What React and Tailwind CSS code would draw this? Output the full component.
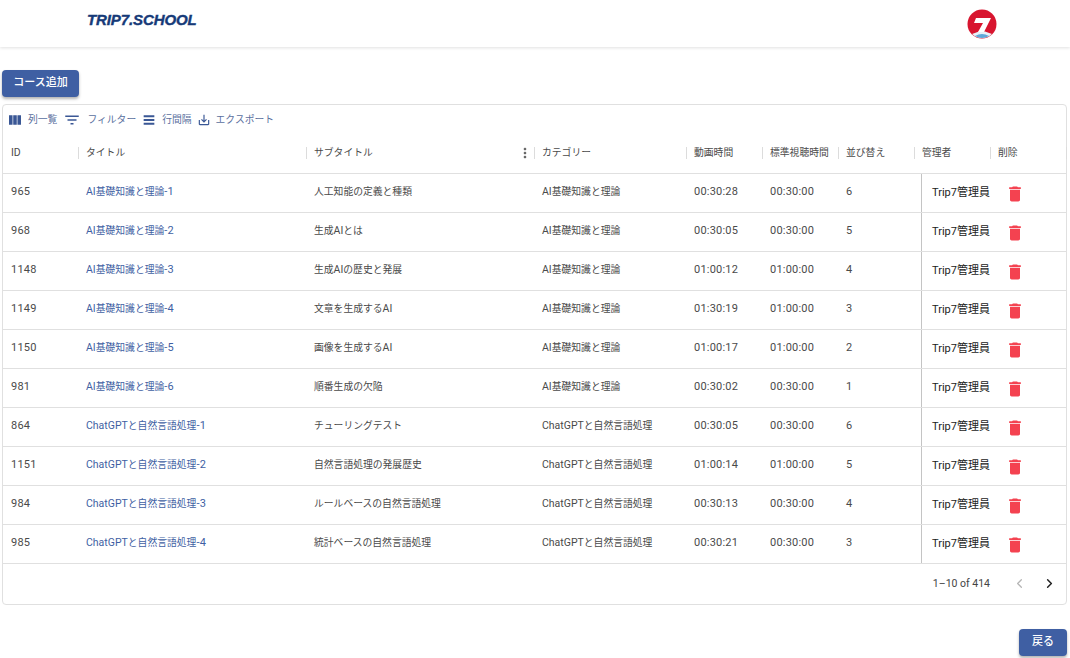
import { ChevronLeft, ChevronRight } from "lucide-react";

const FONT = "font-['Roboto','Noto_Sans_CJK_JP',sans-serif]";
const COLUMNS = "grid-cols-[75px_228px_228px_152px_76px_76px_76px_76px_76px]";

const AI = "AI基礎知識と理論";
const NLP = "ChatGPTと自然言語処理";

const rows = [
  { id: "965", title: `${AI}-1`, sub: "人工知能の定義と種類", cat: AI, time: "00:30:28", std: "00:30:00", order: "6" },
  { id: "968", title: `${AI}-2`, sub: "生成AIとは", cat: AI, time: "00:30:05", std: "00:30:00", order: "5" },
  { id: "1148", title: `${AI}-3`, sub: "生成AIの歴史と発展", cat: AI, time: "01:00:12", std: "01:00:00", order: "4" },
  { id: "1149", title: `${AI}-4`, sub: "文章を生成するAI", cat: AI, time: "01:30:19", std: "01:00:00", order: "3" },
  { id: "1150", title: `${AI}-5`, sub: "画像を生成するAI", cat: AI, time: "01:00:17", std: "01:00:00", order: "2" },
  { id: "981", title: `${AI}-6`, sub: "順番生成の欠陥", cat: AI, time: "00:30:02", std: "00:30:00", order: "1" },
  { id: "864", title: `${NLP}-1`, sub: "チューリングテスト", cat: NLP, time: "00:30:05", std: "00:30:00", order: "6" },
  { id: "1151", title: `${NLP}-2`, sub: "自然言語処理の発展歴史", cat: NLP, time: "01:00:14", std: "01:00:00", order: "5" },
  { id: "984", title: `${NLP}-3`, sub: "ルールベースの自然言語処理", cat: NLP, time: "00:30:13", std: "00:30:00", order: "4" },
  { id: "985", title: `${NLP}-4`, sub: "統計ベースの自然言語処理", cat: NLP, time: "00:30:21", std: "00:30:00", order: "3" },
];

const headers = ["ID", "タイトル", "サブタイトル", "カテゴリー", "動画時間", "標準視聴時間", "並び替え", "管理者", "削除"];

// Digits and Latin letters sit a little larger than the CJK around them in the reference.
function Mixed({ text }) {
  return text.split(/([0-9:-]+|[A-Za-z]+)/).map((part, i) => {
    if (/^[0-9:-]+$/.test(part)) {
      return <span key={i} className="text-[11px] tracking-[0.2px]">{part}</span>;
    }
    if (/^[A-Za-z]+$/.test(part)) {
      return <span key={i} className="text-[10.5px]">{part}</span>;
    }
    return <span key={i}>{part}</span>;
  });
}

function Icon({ d, className }) {
  return (
    <svg viewBox="0 0 24 24" fill="currentColor" className={className} aria-hidden="true">
      <path d={d} />
    </svg>
  );
}

function ToolbarItem({ d, iconClass, label }) {
  return (
    <div className="flex items-center text-[#3a5795]">
      <Icon d={d} className={iconClass} />
      <span className="text-[9.8px] leading-none text-[#5a6f9e]">{label}</span>
    </div>
  );
}

function HeaderCell({ label, index }) {
  return (
    <div className="relative flex items-center px-2 text-[9.8px] text-[#4a4a4a]">
      <span><Mixed text={label} /></span>
      {index === 2 && (
        <Icon
          d="M12 8c1.1 0 2-.9 2-2s-.9-2-2-2-2 .9-2 2 .9 2 2 2zm0 2c-1.1 0-2 .9-2 2s.9 2 2 2 2-.9 2-2-.9-2-2-2zm0 6c-1.1 0-2 .9-2 2s.9 2 2 2 2-.9 2-2-.9-2-2-2z"
          className="absolute right-[1px] top-[12px] h-[16px] w-[16px] text-[#666]"
        />
      )}
      <span className="absolute right-[-1px] top-[14px] h-[12px] w-[1px] bg-[#dcdcdc]" />
    </div>
  );
}

function TextCell({ text, className = "" }) {
  return (
    <div className={`flex items-center px-2 pb-[2px] ${className}`}>
      <span><Mixed text={text} /></span>
    </div>
  );
}

function Row({ row }) {
  return (
    <div className={`grid h-[39px] border-b border-[#e0e0e0] text-[9.8px] text-[#4a4a4a] ${COLUMNS}`}>
      <TextCell text={row.id} />
      <TextCell text={row.title} className="text-[#3f5fa3]" />
      <TextCell text={row.sub} />
      <TextCell text={row.cat} />
      <TextCell text={row.time} />
      <TextCell text={row.std} />
      <TextCell text={row.order} />
      <div className="col-span-2 flex items-center pl-[7px]">
        <div className="flex h-full items-center border-l border-[#c4c4c4] pl-[10px] text-[11px] text-[#222]">
          <span className="w-[73px]">Trip7管理員</span>
          <Icon
            d="M6 19c0 1.1.9 2 2 2h8c1.1 0 2-.9 2-2V7H6v12zM19 4h-3.5l-1-1h-5l-1 1H5v2h14V4z"
            className="mt-[1px] h-[20px] w-[20px] shrink-0 text-[#f44250]"
          />
        </div>
      </div>
    </div>
  );
}

export default function App() {
  return (
    <div className={`flex h-[658px] w-[1070px] flex-col overflow-hidden bg-white ${FONT}`}>
      <header className="flex h-[47px] shrink-0 items-center justify-between pl-[87px] pr-[73px] shadow-[0_1px_3px_rgba(0,0,0,0.12)]">
        <span className="mb-[8px] font-['Liberation_Sans',sans-serif] text-[15px] font-bold italic leading-none tracking-[-0.1px] text-[#163a78] [-webkit-text-stroke:0.4px_#163a78]">
          TRIP7.SCHOOL
        </span>
        <svg viewBox="0 0 30 30" className="h-[30px] w-[30px]" aria-hidden="true">
          <circle cx="15" cy="15" r="14.5" fill="#d8152f" />
          <path d="M5 25 L12 22.5 L18 22.5 L25 25 A14.5 14.5 0 0 1 5 25Z" fill="#e8f2f8" />
          <path d="M8 27 Q15 23 22 27 A14.5 14.5 0 0 1 8 27Z" fill="#5fa8d8" />
          <path d="M9 9 H24 L17 23 H11 L16 14 H7 Z" fill="#fff" />
        </svg>
      </header>

      <main className="flex flex-1 flex-col px-[2px] pt-[23px]">
        <button className="h-[27px] w-[77px] rounded-[4px] bg-[#3f5fa3] text-[11px] font-medium text-white shadow-[0_2px_3px_rgba(0,0,0,0.3)]">
          コース追加
        </button>

        <section className="mt-[7px] h-[501px] w-[1065px] rounded-[4px] border border-[#e0e0e0]">
          <div className="flex h-[28px] items-center pl-[4px] pt-[1px]">
            <ToolbarItem
              d="M14.67 5v14H9.33V5h5.34zm1 14H21V5h-5.33v14zm-7.34 0V5H3v14h5.33z"
              iconClass="mr-[5px] h-[16px] w-[16px]"
              label="列一覧"
            />
            <div className="ml-[6px]">
              <ToolbarItem
                d="M10 18h4v-2h-4v2zM3 6v2h18V6H3zm3 7h12v-2H6v2z"
                iconClass="mr-[6px] h-[18px] w-[18px]"
                label="フィルター"
              />
            </div>
            <div className="ml-[5px]">
              <ToolbarItem
                d="M4 5h16v3H4zM4 10.5h16v3H4zM4 16h16v3H4z"
                iconClass="mr-[5px] h-[16px] w-[16px]"
                label="行間隔"
              />
            </div>
            <div className="ml-[5px]">
              <ToolbarItem
                d="M19 12v7H5v-7H3v7c0 1.1.9 2 2 2h14c1.1 0 2-.9 2-2v-7h-2zm-6 .67l2.59-2.58L17 11.5l-5 5-5-5 1.41-1.41L11 12.67V3h2z"
                iconClass="mr-[5px] h-[14px] w-[14px]"
                label="エクスポート"
              />
            </div>
          </div>

          <div className={`grid h-[41px] border-b border-[#e0e0e0] ${COLUMNS}`}>
            {headers.map((label, i) => (
              <HeaderCell key={label} label={label} index={i} />
            ))}
          </div>

          {rows.map((row) => (
            <Row key={row.id} row={row} />
          ))}

          <div className="flex h-[39px] items-center justify-end text-[10.5px] text-[#444]">
            <span>1–10 of 414</span>
            <ChevronLeft className="ml-[22px] h-[15px] w-[15px] text-[#b5b5b5]" />
            <ChevronRight className="ml-[15px] mr-[9px] h-[15px] w-[15px] text-[#222]" strokeWidth={2.4} />
          </div>
        </section>

        <div className="mt-[24px] flex w-[1065px] justify-end">
          <button className="h-[27px] w-[48px] rounded-[4px] bg-[#3f5fa3] text-[11px] font-medium text-white shadow-[0_2px_3px_rgba(0,0,0,0.3)]">
            戻る
          </button>
        </div>
      </main>
    </div>
  );
}
